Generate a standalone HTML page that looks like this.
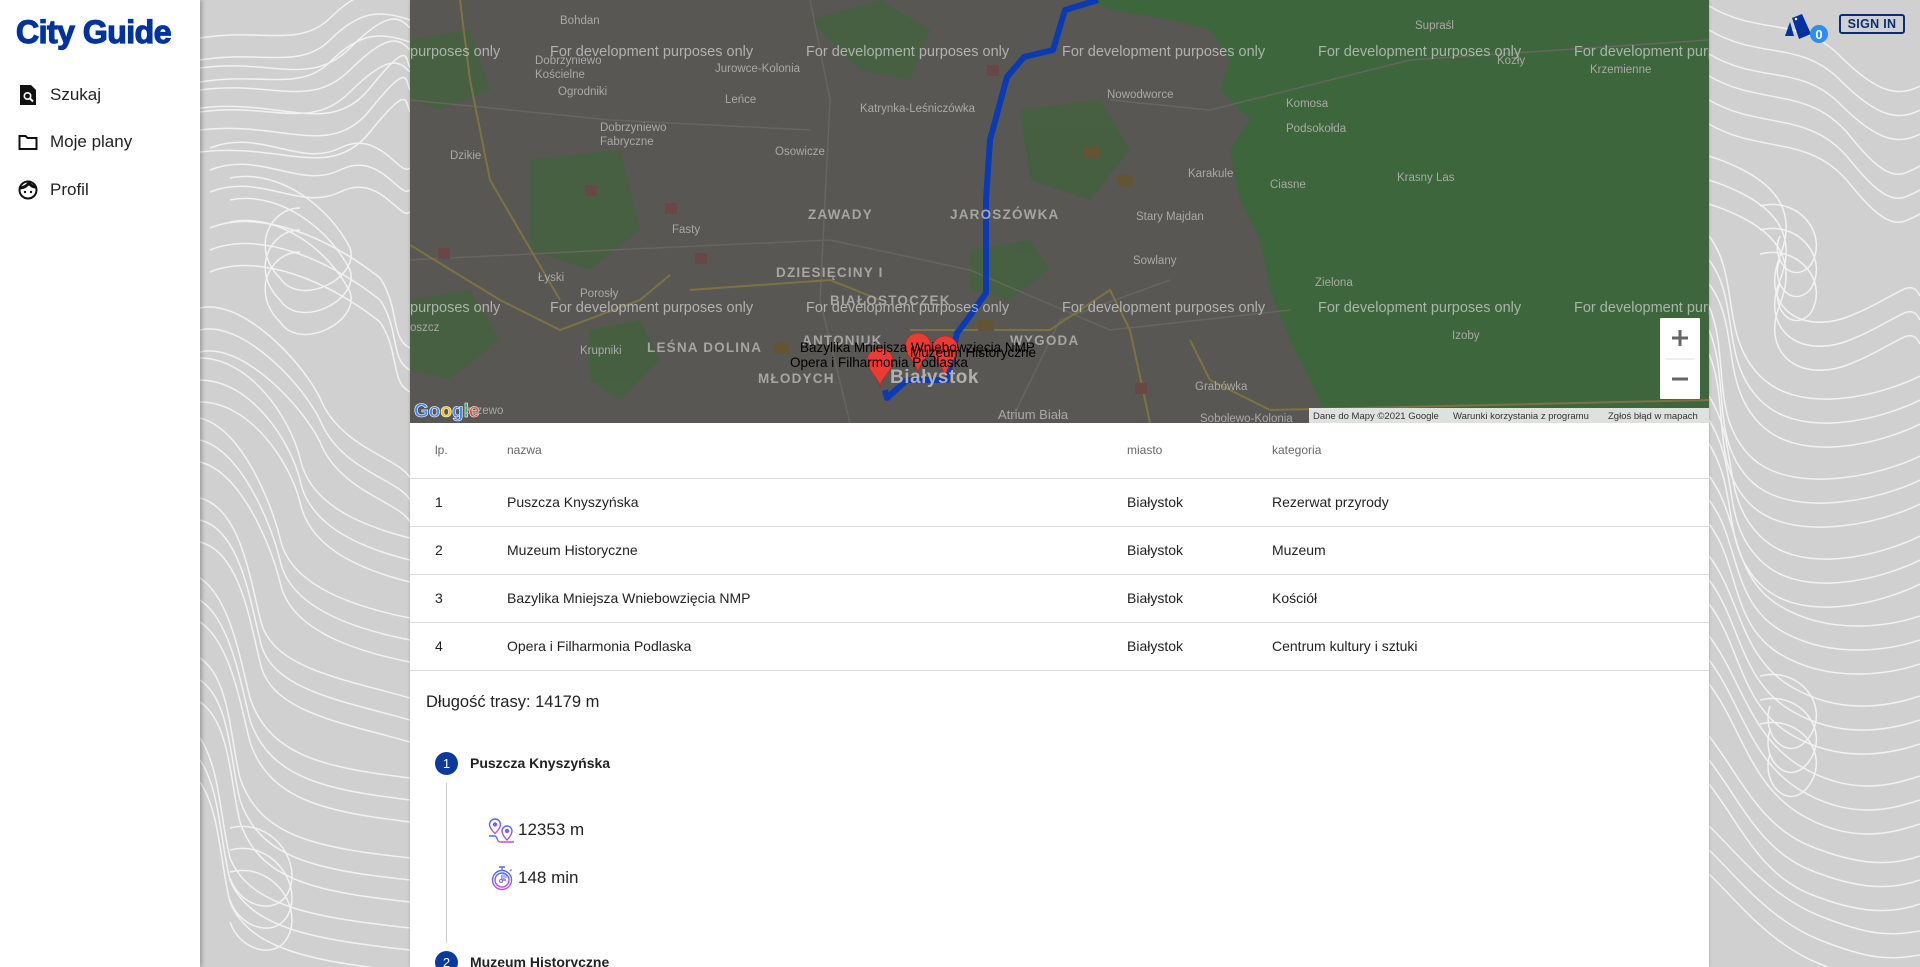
<!DOCTYPE html>
<html><head><meta charset="utf-8">
<style>
*{box-sizing:border-box;margin:0;padding:0}
html,body{width:1920px;height:967px;overflow:hidden}
body{background:#d0d0d0;font-family:"Liberation Sans",sans-serif;position:relative}
#bg{position:absolute;left:0;top:0}
.side{position:absolute;left:0;top:0;width:200px;height:967px;background:#fff;box-shadow:2px 0 4px rgba(0,0,0,.25);z-index:3}
.logo{position:absolute;left:16px;top:14px;font-size:32px;font-weight:bold;color:#0033a0;letter-spacing:-0.5px;white-space:nowrap;-webkit-text-stroke:1.2px #0033a0}
.mi{position:absolute;left:18px;display:flex;align-items:center;font-size:17px;color:#222;white-space:nowrap}
.mi svg{margin-right:12px}
.panel{position:absolute;left:410px;top:0;width:1299px;height:967px;background:#fff;box-shadow:0 0 3px rgba(0,0,0,.2)}
.map{position:absolute;left:0;top:0;width:1299px;height:423px;overflow:hidden;background:#585754}
.wm{position:absolute;color:rgba(215,215,215,.7);font-size:14.5px;white-space:nowrap}
.ml{position:absolute;color:#a9a9a6;font-size:11.5px;white-space:nowrap;line-height:1.2}
.mlb{position:absolute;color:#a5a5a2;font-size:13.5px;font-weight:bold;letter-spacing:1.2px;white-space:nowrap}
.pl{position:absolute;color:#000;font-size:13.5px;white-space:nowrap}
table{position:absolute;top:423px;left:0;width:1299px;border-collapse:collapse}
th{height:55px;font-weight:normal;font-size:12px;color:#666;text-align:left;border-bottom:1px solid #ddd}
td{height:48px;font-size:14px;color:#222;border-bottom:1px solid #ddd}
.c1{padding-left:25px;width:97px}.c2{width:620px}.c3{width:145px}
</style></head><body>
<svg id="bg" width="1920" height="967" viewBox="0 0 1920 967" fill="none" stroke="#f2f2f2" stroke-width="1.5">
<defs>
<g id="cl">
<path d="M200 60 C260 50 300 70 330 40 S380 10 410 20"/>
<path d="M200 90 C270 80 310 110 350 70 S400 40 410 50"/>
<path d="M200 130 C280 120 330 160 370 110 S405 80 410 90"/>
<path d="M210 170 C260 150 300 190 340 170 C380 150 400 200 410 190"/>
<path d="M230 200 C280 190 330 230 350 270 C360 300 300 330 280 300 C250 270 270 230 300 230"/>
<path d="M210 250 C260 230 330 260 380 300 C400 330 390 360 410 370"/>
<path d="M200 330 C240 320 300 380 320 420 C340 470 400 480 410 500"/>
<path d="M200 380 C250 380 290 440 300 480 C310 530 370 550 410 560"/>
<path d="M200 440 C240 450 270 520 280 560 C290 610 360 630 410 640"/>
<path d="M200 520 C240 530 250 600 260 640 C270 690 340 700 410 720"/>
<path d="M200 600 C230 620 240 680 250 720 C270 780 330 790 410 800"/>
<path d="M200 680 C230 700 230 760 240 800 C260 860 320 870 410 880"/>
<path d="M200 760 C220 790 220 840 230 880 C250 930 320 940 410 950"/>
<path d="M230 850 C270 840 300 880 290 910 C280 940 240 930 230 900"/>
</g>
<g id="cr">
<path d="M1709 30 C1760 60 1800 40 1840 80 S1900 120 1920 110"/>
<path d="M1709 100 C1760 130 1810 110 1850 160 S1900 200 1920 190"/>
<path d="M1709 180 C1770 200 1800 230 1780 280 C1760 330 1800 360 1850 340 S1910 300 1920 320"/>
<path d="M1760 230 C1800 220 1830 260 1810 290 C1790 310 1770 280 1780 260"/>
<path d="M1709 260 C1740 300 1720 360 1760 400 S1880 420 1920 400"/>
<path d="M1709 330 C1730 380 1710 440 1750 480 S1880 500 1920 480"/>
<path d="M1709 420 C1740 470 1720 520 1760 560 S1880 580 1920 560"/>
<path d="M1709 500 C1740 540 1730 600 1780 630 S1890 650 1920 640"/>
<path d="M1709 580 C1740 620 1740 680 1790 710 S1890 730 1920 720"/>
<path d="M1709 660 C1740 700 1750 760 1800 790 S1890 810 1920 800"/>
<path d="M1760 700 C1800 690 1830 730 1810 760 C1790 790 1760 760 1770 730"/>
<path d="M1709 760 C1740 800 1760 850 1810 870 S1890 890 1920 880"/>
<path d="M1709 850 C1740 880 1770 920 1820 940 S1890 960 1920 955"/>
</g>
</defs>
<use href="#cl"/><use href="#cl" transform="translate(0,22)"/><use href="#cl" transform="translate(0,-22)"/>
<use href="#cr"/><use href="#cr" transform="translate(0,24)"/><use href="#cr" transform="translate(0,-24)"/>
</svg>

<div class="side">
<div class="logo">City Guide</div>
<div class="mi" style="top:84px"><svg width="20" height="22" viewBox="0 0 20 22"><path d="M2 1h11l5 5v15H2z" fill="#111"/><circle cx="9.5" cy="12" r="4" fill="#fff"/><circle cx="9.5" cy="12" r="2.4" fill="#111"/><path d="M11.5 14l3.5 3.5" stroke="#fff" stroke-width="2"/></svg>Szukaj</div>
<div class="mi" style="top:132px"><svg width="20" height="20" viewBox="0 0 20 20"><path d="M1.5 4h6l2 2h9v11h-17z" fill="none" stroke="#111" stroke-width="2"/></svg>Moje plany</div>
<div class="mi" style="top:180px"><svg width="20" height="20" viewBox="0 0 20 20"><circle cx="10" cy="10" r="8.5" fill="none" stroke="#111" stroke-width="2"/><path d="M2 8c3 0 7-2 9-5 2 3 5 4 7 4" stroke="#111" stroke-width="3" fill="none"/><circle cx="7" cy="12" r="1.2" fill="#111"/><circle cx="13" cy="12" r="1.2" fill="#111"/></svg>Profil</div>
</div>

<svg style="position:absolute;left:1782px;top:12px" width="50" height="34" viewBox="0 0 50 34">
<path d="M3 24 L8 10 L12 24z" fill="#0033a0"/>
<path d="M10 6 L20 2 L29 22 L17 27z" fill="#0033a0"/>
<circle cx="14" cy="7" r="1.3" fill="#fff"/>
<circle cx="37" cy="22" r="9" fill="#2d8cf0"/>
<text x="37" y="27" text-anchor="middle" font-family="Liberation Sans" font-weight="bold" font-size="13" fill="#fff">0</text>
</svg>
<div style="position:absolute;left:1839px;top:14px;width:66px;height:20px;border:2px solid #0a2d7a;border-radius:3px;font-size:12.5px;font-weight:bold;color:#0a2d7a;text-align:center;line-height:16px;letter-spacing:.3px">SIGN IN</div>

<div class="panel">
<div class="map">
<svg width="1299" height="423" viewBox="0 0 1299 423" style="position:absolute;left:0;top:0">
<path d="M680 0 L1299 0 L1299 423 L920 423 L900 380 L880 340 L860 290 L850 240 L830 200 L820 150 L840 120 L810 90 L820 60 L800 30 L760 20 L700 10z" fill="#3d663c"/>
<g fill="#43613e" opacity=".85">
<path d="M400 20 L470 0 L520 30 L500 80 L450 70z"/>
<path d="M120 160 L210 150 L230 230 L180 270 L120 250z"/>
<path d="M0 300 L60 290 L90 340 L40 380 L0 370z"/>
<path d="M610 110 L690 100 L720 150 L680 200 L620 180z"/>
<path d="M560 250 L620 240 L640 270 L600 300 L560 290z"/>
<path d="M0 40 L60 30 L80 90 L30 110 L0 100z"/>
<path d="M180 330 L230 320 L250 360 L210 400 L180 380z"/>
</g>
<g stroke="#666560" stroke-width="1.5" fill="none">
<path d="M0 260 L200 250 L420 240 L560 270 L700 330 L880 310"/>
<path d="M400 0 L420 100 L410 300 L440 423"/>
<path d="M0 100 L200 120 L400 130"/>
<path d="M700 100 L800 110 L1000 60 L1299 40"/>
<path d="M600 423 L650 320 L760 280"/>
</g>
<g stroke="#7d7244" stroke-width="2" fill="none">
<path d="M0 245 L90 300 L150 330 L230 300 L260 275"/>
<path d="M50 0 L60 80 L80 180 L150 300"/>
<path d="M280 290 L420 280 L470 300"/>
<path d="M500 330 L640 330 L700 290 L720 330 L740 423"/>
<path d="M780 340 L800 380 L860 410 L1299 400"/>
</g>
<polyline points="1098,0 1065,10 1053,50 1024,57 1007,77 990,140 986,200 986,293 967,320 957,333 947,380 907,380 887,398 885,390" transform="translate(-410,0)" fill="none" stroke="#0a3bb5" stroke-width="6" stroke-linejoin="round"/>
<g transform="translate(-410,0)">
<path d="M880 348 a13 13 0 0 1 13 13 c0 10 -13 17 -13 27 c0 -10 -13 -17 -13 -27 a13 13 0 0 1 13 -13z" fill="#ea3b35" stroke="#a22" stroke-width=".6"/>
<path d="M918 333 a13 13 0 0 1 13 13 c0 10 -13 17 -13 29 c0 -12 -13 -19 -13 -29 a13 13 0 0 1 13 -13z" fill="#ea3b35" stroke="#a22" stroke-width=".6"/>
<path d="M945 336 a13 13 0 0 1 13 13 c0 10 -13 17 -13 31 c0 -14 -13 -21 -13 -31 a13 13 0 0 1 13 -13z" fill="#ea3b35" stroke="#a22" stroke-width=".6"/>
</g>
<g fill="#6a4747"><rect x="175" y="185" width="12" height="11"/><rect x="28" y="248" width="12" height="11"/><rect x="285" y="253" width="12" height="11"/><rect x="255" y="203" width="12" height="11"/><rect x="725" y="383" width="12" height="11"/><rect x="577" y="65" width="12" height="11"/></g>
<g fill="#635533"><rect x="673" y="147" width="16" height="11"/><rect x="707" y="175" width="16" height="11"/><rect x="568" y="320" width="16" height="11"/><rect x="363" y="343" width="16" height="11"/></g>
<rect x="1250" y="318" width="40" height="81" fill="#fff" rx="1"/>
<path d="M1262 338h16M1270 330v16M1262 379h16" stroke="#666" stroke-width="3"/>
<line x1="1256" y1="359" x2="1284" y2="359" stroke="#ddd"/>
<rect x="899" y="408" width="400" height="15" fill="#f0f0f0" opacity=".9"/>
<text x="903" y="419" font-family="Liberation Sans" font-size="9.5" fill="#333">Dane do Mapy ©2021 Google</text>
<text x="1043" y="419" font-family="Liberation Sans" font-size="9.5" fill="#333">Warunki korzystania z programu</text>
<text x="1198" y="419" font-family="Liberation Sans" font-size="9.5" fill="#333">Zgłoś błąd w mapach</text>
<text x="4" y="417" font-family="Liberation Sans" font-weight="bold" font-size="19" fill="#4285f4" stroke="#fff" stroke-width=".6">Go<tspan fill="#fbbc05">o</tspan><tspan fill="#4285f4">g</tspan><tspan fill="#34a853">l</tspan><tspan fill="#ea4335">e</tspan></text>
</svg>
<div class="wm" style="left:0;top:44px">purposes only</div>
<div class="wm" style="left:140px;top:44px">For development purposes only</div>
<div class="wm" style="left:396px;top:44px">For development purposes only</div>
<div class="wm" style="left:652px;top:44px">For development purposes only</div>
<div class="wm" style="left:908px;top:44px">For development purposes only</div>
<div class="wm" style="left:1164px;top:44px">For development purposes only</div>
<div class="wm" style="left:0;top:300px">purposes only</div>
<div class="wm" style="left:140px;top:300px">For development purposes only</div>
<div class="wm" style="left:396px;top:300px">For development purposes only</div>
<div class="wm" style="left:652px;top:300px">For development purposes only</div>
<div class="wm" style="left:908px;top:300px">For development purposes only</div>
<div class="wm" style="left:1164px;top:300px">For development purposes only</div>
<div class="ml" style="left:150px;top:15px">Bohdan</div>
<div class="ml" style="left:125px;top:55px">Dobrzyniewo<br>Kościelne</div>
<div class="ml" style="left:148px;top:86px">Ogrodniki</div>
<div class="ml" style="left:305px;top:63px">Jurowce-Kolonia</div>
<div class="ml" style="left:315px;top:94px">Leńce</div>
<div class="ml" style="left:450px;top:103px">Katrynka-Leśniczówka</div>
<div class="ml" style="left:190px;top:122px">Dobrzyniewo<br>Fabryczne</div>
<div class="ml" style="left:40px;top:150px">Dzikie</div>
<div class="ml" style="left:365px;top:146px">Osowicze</div>
<div class="ml" style="left:262px;top:224px">Fasty</div>
<div class="ml" style="left:128px;top:272px">Łyski</div>
<div class="ml" style="left:170px;top:288px">Porosły</div>
<div class="ml" style="left:170px;top:345px">Krupniki</div>
<div class="ml" style="left:0;top:322px">oszcz</div>
<div class="ml" style="left:55px;top:405px">zczewo</div>
<div class="ml" style="left:697px;top:89px">Nowodworce</div>
<div class="ml" style="left:876px;top:98px">Komosa</div>
<div class="ml" style="left:876px;top:123px">Podsokołda</div>
<div class="ml" style="left:1005px;top:20px">Supraśl</div>
<div class="ml" style="left:1087px;top:55px">Kozły</div>
<div class="ml" style="left:1180px;top:64px">Krzemienne</div>
<div class="ml" style="left:778px;top:168px">Karakule</div>
<div class="ml" style="left:860px;top:179px">Ciasne</div>
<div class="ml" style="left:987px;top:172px">Krasny Las</div>
<div class="ml" style="left:726px;top:211px">Stary Majdan</div>
<div class="ml" style="left:723px;top:255px">Sowlany</div>
<div class="ml" style="left:905px;top:277px">Zielona</div>
<div class="ml" style="left:1042px;top:330px">Izoby</div>
<div class="ml" style="left:785px;top:381px">Grabówka</div>
<div class="ml" style="left:790px;top:413px">Sobolewo-Kolonia</div>
<div class="ml" style="left:588px;top:407px;font-size:13px">Atrium Biała</div>
<div class="mlb" style="left:398px;top:207px">ZAWADY</div>
<div class="mlb" style="left:540px;top:207px">JAROSZÓWKA</div>
<div class="mlb" style="left:366px;top:265px">DZIESIĘCINY I</div>
<div class="mlb" style="left:420px;top:293px">BIAŁOSTOCZEK</div>
<div class="mlb" style="left:392px;top:333px">ANTONIUK</div>
<div class="mlb" style="left:600px;top:333px">WYGODA</div>
<div class="mlb" style="left:237px;top:340px">LEŚNA DOLINA</div>
<div class="mlb" style="left:348px;top:371px">MŁODYCH</div>
<div class="mlb" style="left:480px;top:367px;font-size:19px;color:#b0b0ad;letter-spacing:.5px">Białystok</div>
<div class="pl" style="left:390px;top:340px">Bazylika Mniejsza Wniebowzięcia NMP</div>
<div class="pl" style="left:500px;top:345px">Muzeum Historyczne</div>
<div class="pl" style="left:380px;top:355px">Opera i Filharmonia Podlaska</div>
</div>
<table>
<tr><th class="c1">lp.</th><th class="c2">nazwa</th><th class="c3">miasto</th><th>kategoria</th></tr>
<tr><td class="c1">1</td><td>Puszcza Knyszyńska</td><td>Białystok</td><td>Rezerwat przyrody</td></tr>
<tr><td class="c1">2</td><td>Muzeum Historyczne</td><td>Białystok</td><td>Muzeum</td></tr>
<tr><td class="c1">3</td><td>Bazylika Mniejsza Wniebowzięcia NMP</td><td>Białystok</td><td>Kościół</td></tr>
<tr><td class="c1">4</td><td>Opera i Filharmonia Podlaska</td><td>Białystok</td><td>Centrum kultury i sztuki</td></tr>
</table>
<div style="position:absolute;left:16px;top:693px;font-size:16.5px;color:#222">Długość trasy: 14179 m</div>
<div style="position:absolute;left:25px;top:752px;width:23px;height:23px;border-radius:50%;background:#0b3a9c;color:#fff;font-size:13px;text-align:center;line-height:23px">1</div>
<div style="position:absolute;left:60px;top:755px;font-size:14px;font-weight:bold;color:#222">Puszcza Knyszyńska</div>
<div style="position:absolute;left:36px;top:783px;width:1px;height:160px;background:#ccc"></div>
<svg style="position:absolute;left:78px;top:818px" width="28" height="26" viewBox="0 0 28 26" fill="none"><defs><linearGradient id="g" x1="0" y1="0" x2="0" y2="1"><stop offset="0" stop-color="#4a6cf7"/><stop offset="1" stop-color="#c04ee0"/></linearGradient></defs><g stroke="url(#g)" stroke-width="1.4"><path d="M7 1a5.5 5.5 0 0 1 5.5 5.5c0 4-5.5 9-5.5 9s-5.5-5-5.5-9A5.5 5.5 0 0 1 7 1z"/><circle cx="7" cy="6.5" r="1.5" fill="#4a6cf7"/><path d="M19 8a5 5 0 0 1 5 5c0 4-5 9-5 9s-5-5-5-9a5 5 0 0 1 5-5z"/><circle cx="19" cy="13" r="1.5" fill="#8a5cf0"/><path d="M1 18h6c2 0 2 6 5 6h14"/></g></svg>
<div style="position:absolute;left:108px;top:820px;font-size:17px;color:#222">12353 m</div>
<svg style="position:absolute;left:80px;top:865px" width="24" height="26" viewBox="0 0 24 26" fill="none"><defs><linearGradient id="h" x1="0" y1="0" x2="0" y2="1"><stop offset="0" stop-color="#4a6cf7"/><stop offset="1" stop-color="#c04ee0"/></linearGradient></defs><g stroke="url(#h)" stroke-width="1.4"><circle cx="12" cy="15" r="9.5"/><circle cx="12" cy="15" r="7"/><path d="M9 2h6M12 2v3.5M20 6l1.5-1.5"/><path d="M12 15V10M12 15h4"/></g><path d="M12 15V9a6 6 0 0 1 5.5 3.5z" fill="#a9b8f9"/><circle cx="11" cy="16" r="1.5" fill="#fff" stroke="#8a5cf0"/></svg>
<div style="position:absolute;left:108px;top:868px;font-size:17px;color:#222">148 min</div>
<div style="position:absolute;left:25px;top:951px;width:23px;height:23px;border-radius:50%;background:#0b3a9c;color:#fff;font-size:13px;text-align:center;line-height:23px">2</div>
<div style="position:absolute;left:60px;top:954px;font-size:14px;font-weight:bold;color:#222">Muzeum Historyczne</div>
</div>
</body></html>
